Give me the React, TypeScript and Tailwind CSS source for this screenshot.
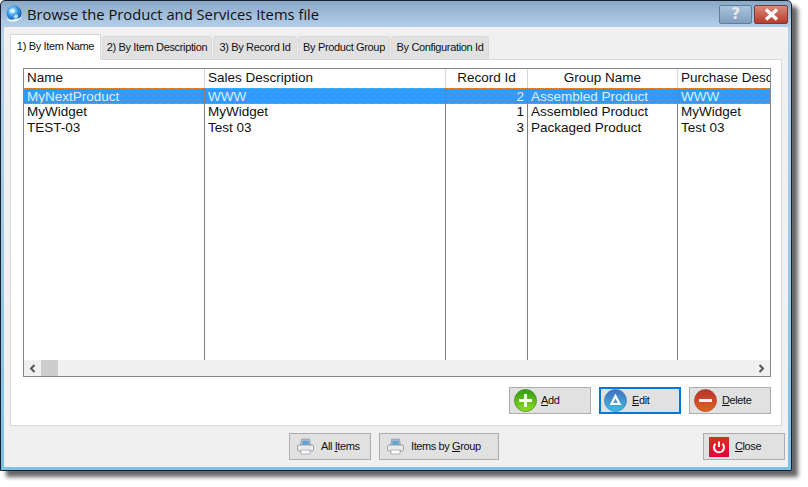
const columns = [
  { title: 'Name', width: 'w-[181px]', align: 'text-left', cells: ['MyNextProduct', 'MyWidget', 'TEST-03'] },
  { title: 'Sales Description', width: 'w-[241px]', align: 'text-left', cells: ['WWW', 'MyWidget', 'Test 03'] },
  { title: 'Record Id', width: 'w-[82px]', align: 'text-right', cells: ['2', '1', '3'] },
  { title: 'Group Name', width: 'w-[150px]', align: 'text-left', cells: ['Assembled Product', 'Assembled Product', 'Packaged Product'] },
  { title: 'Purchase Description', width: 'w-[94px]', align: 'text-left', cells: ['WWW', 'MyWidget', 'Test 03'] },
];

const tabs = [
  { label: '2) By Item Description', width: 'w-[110px]' },
  { label: '3) By Record Id', width: 'w-[84px]' },
  { label: 'By Product Group', width: 'w-[92px]' },
  { label: 'By Configuration Id', width: 'w-[98px]' },
];

function GlobeIcon() {
  return (
    <svg width="18" height="18" viewBox="0 0 18 18">
      <defs>
        <radialGradient id="globe" cx="0.4" cy="0.35" r="0.7">
          <stop offset="0" stopColor="#bfefff" />
          <stop offset="0.55" stopColor="#2f8fe0" />
          <stop offset="1" stopColor="#0d4fa8" />
        </radialGradient>
      </defs>
      <circle cx="9" cy="8" r="7.5" fill="url(#globe)" />
      <path d="M5 5c2-2 4-1 5 0s-1 3-3 3-3-2-2-3zM10 10c2-1 4 0 3 2s-3 2-4 1 0-2 1-3z" fill="#e4f8ff" opacity="0.75" />
      <path d="M1 14c3 4 11 4 16-2-3 1-10 4-16 2z" fill="#e6f5fc" />
    </svg>
  );
}

function PlusIcon() {
  return (
    <svg width="23" height="23" viewBox="0 0 23 23">
      <defs>
        <linearGradient id="green" x1="0" y1="0" x2="0" y2="1">
          <stop offset="0" stopColor="#2f9a12" />
          <stop offset="1" stopColor="#8fe01e" />
        </linearGradient>
      </defs>
      <circle cx="11.5" cy="11.5" r="11" fill="url(#green)" stroke="#3d8f22" strokeWidth="0.8" />
      <path d="M11.5 5v13M5 11.5h13" stroke="#f4fff0" strokeWidth="3" />
    </svg>
  );
}

function EditIcon() {
  return (
    <svg width="23" height="23" viewBox="0 0 23 23">
      <defs>
        <linearGradient id="blue" x1="0" y1="0" x2="0" y2="1">
          <stop offset="0" stopColor="#3f6fc0" />
          <stop offset="1" stopColor="#45bedc" />
        </linearGradient>
      </defs>
      <circle cx="11.5" cy="11.5" r="11" fill="url(#blue)" stroke="#4a7fb8" strokeWidth="0.8" />
      <path d="M11.5 7 15.5 15H7.5z" fill="none" stroke="#fff" strokeWidth="2.2" />
    </svg>
  );
}

function MinusIcon() {
  return (
    <svg width="23" height="23" viewBox="0 0 23 23">
      <defs>
        <linearGradient id="red" x1="0" y1="0" x2="0" y2="1">
          <stop offset="0" stopColor="#b8322c" />
          <stop offset="1" stopColor="#e0641e" />
        </linearGradient>
      </defs>
      <circle cx="11.5" cy="11.5" r="11" fill="url(#red)" stroke="#b04a3a" strokeWidth="0.8" />
      <path d="M5 11.5h13" stroke="#f8f0ee" strokeWidth="3" />
    </svg>
  );
}

function PowerIcon() {
  return (
    <svg width="20" height="20" viewBox="0 0 20 20">
      <defs>
        <linearGradient id="power" x1="0" y1="0" x2="0" y2="1">
          <stop offset="0" stopColor="#d9301c" />
          <stop offset="1" stopColor="#e8003a" />
        </linearGradient>
      </defs>
      <rect width="20" height="20" fill="url(#power)" />
      <path d="M6.5 6.8a5 5 0 1 0 7 0" fill="none" stroke="#fff" strokeWidth="2" />
      <path d="M10 4.5v5.5" stroke="#fff" strokeWidth="2" />
    </svg>
  );
}

function PrinterIcon() {
  return (
    <svg width="17" height="17" viewBox="0 0 17 17">
      <path d="M4.5 1h8l1 6h-10z" fill="#a9b8c6" stroke="#8b98a5" strokeWidth="0.6" />
      <rect x="5.5" y="3" width="6" height="4" fill="#58a6d6" />
      <rect x="0.5" y="7" width="16" height="6" rx="1.5" fill="#e8eaec" stroke="#9a9ea3" />
      <rect x="4" y="12" width="9" height="4" fill="#fbfbfb" stroke="#9a9ea3" strokeWidth="0.7" />
    </svg>
  );
}

function ActionButton({
  icon,
  width,
  focused,
  gap,
  children,
}: {
  icon: React.ReactNode;
  width: string;
  focused?: boolean;
  gap: string;
  children: React.ReactNode;
}) {
  return (
    <button
      className={`flex h-[27px] items-center bg-[#e1e1e1] text-[11px] tracking-[-0.4px] text-[#111] ${width} ${gap} ${
        focused ? 'border-2 border-[#0078d7] pl-[3px]' : 'border border-[#adadad] pl-[4px]'
      }`}
    >
      {icon}
      <span className="whitespace-nowrap">{children}</span>
    </button>
  );
}

// 1px dotted orange focus edge of the selected row
function FocusEdge() {
  return <div className="h-px shrink-0 bg-[repeating-linear-gradient(90deg,#f08a24_0_1px,#3399ff_1px_2px)]" />;
}

export default function App() {
  return (
    <div className="h-[487px] w-[808px] overflow-hidden bg-white font-['Liberation_Sans',sans-serif]">
      <div className="flex h-[471px] w-[792px] flex-col rounded-t-[5px] border border-[#16202b] bg-[linear-gradient(#8aa8c7,#b8d2ec_6%,#7cc0e6)] shadow-[6px_6px_4px_#666666]">
        <div className="flex h-[26px] shrink-0 items-center pl-[4px]">
          <GlobeIcon />
          <span className="ml-[4px] font-['Open_Sans',sans-serif] text-[14.75px] text-[#101010]">
            Browse the Product and Services Items file
          </span>
          <div className="ml-auto mr-[3px] mt-[4px] flex h-[19px] gap-[2px] self-start">
            <div className="flex w-[33px] items-center justify-center rounded-[2px] border border-[#5f7c98] bg-[linear-gradient(#a9c3dc,#7f9fbe)] font-['DejaVu_Sans',sans-serif] text-[15px] font-bold leading-none text-[#e8e8e8]">
              ?
            </div>
            <div className="flex w-[34px] items-center justify-center rounded-[2px] border border-[#7d3a33] bg-[linear-gradient(#d98a7c,#b83b2a)]">
              <svg width="15" height="13" viewBox="0 0 15 13">
                <path d="M2 1.5 13 11.5M13 1.5 2 11.5" stroke="#fff" strokeWidth="3.4" />
              </svg>
            </div>
          </div>
        </div>

        <div className="mx-[3px] mb-[3px] flex flex-1 flex-col bg-[#f0f0f0]">
          <div className="ml-[6px] mt-[7px] flex h-[25px] items-end gap-[1px] whitespace-nowrap text-[11px] tracking-[-0.35px] text-[#111]">
            <div className="z-10 -mb-px flex h-[26px] w-[91px] items-center justify-center border-x border-t border-[#d9d9d9] bg-white pb-[3px]">
              1) By Item Name
            </div>
            {tabs.map((tab) => (
              <div
                key={tab.label}
                className={`flex h-[23px] items-center justify-center rounded-t-[3px] border-x border-t border-[#d9d9d9] bg-[#e1e1e1] pb-[2px] ${tab.width}`}
              >
                {tab.label}
              </div>
            ))}
          </div>

          <div className="ml-[6px] mr-[6px] flex h-[367px] flex-col border border-[#d9d9d9] bg-white pl-[12px] pr-[10px] pt-[8px]">
            <div className="flex h-[309px] flex-col border border-[#828790] text-[13.5px] leading-[16px] text-[#111]">
              <div className="flex min-h-0 flex-1 overflow-hidden">
                {columns.map((col, c) => (
                  <div key={col.title} className={`flex shrink-0 flex-col ${col.width}`}>
                    <div
                      className={`h-[19px] overflow-hidden whitespace-nowrap border-r border-[#d5d5d5] px-[3px] pt-[1px] ${
                        col.align === 'text-right' || col.title === 'Group Name' ? 'text-center' : 'text-left'
                      }`}
                    >
                      {col.title}
                    </div>
                    <div className={`flex flex-1 flex-col ${c < columns.length - 1 ? 'border-r border-[#808080]' : ''}`}>
                      {col.cells.map((cell, i) =>
                        i === 0 ? (
                          <div key={i} className="flex h-[16px] flex-col bg-[#3399ff] text-[#dcefff]">
                            <FocusEdge />
                            <div className={`h-[14px] overflow-hidden whitespace-nowrap px-[3px] leading-[15px] ${col.align}`}>{cell}</div>
                            <FocusEdge />
                          </div>
                        ) : (
                          <div key={i} className={`h-[16px] overflow-hidden whitespace-nowrap px-[3px] ${col.align}`}>
                            {cell}
                          </div>
                        ),
                      )}
                    </div>
                  </div>
                ))}
              </div>
              <div className="flex h-[16px] shrink-0 items-center bg-[#f0f0f0]">
                <svg className="ml-[5px]" width="7" height="9" viewBox="0 0 7 9">
                  <path d="M5.5 1 2 4.5 5.5 8" fill="none" stroke="#555" strokeWidth="2" />
                </svg>
                <div className="ml-[5px] h-full w-[17px] bg-[#cdcdcd]" />
                <svg className="ml-auto mr-[5px]" width="7" height="9" viewBox="0 0 7 9">
                  <path d="M1.5 1 5 4.5 1.5 8" fill="none" stroke="#555" strokeWidth="2" />
                </svg>
              </div>
            </div>

            <div className="mt-[10px] flex justify-end gap-[8px]">
              <ActionButton icon={<PlusIcon />} width="w-[82px]" gap="gap-[4px]">
                <u>A</u>dd
              </ActionButton>
              <ActionButton icon={<EditIcon />} width="w-[82px]" gap="gap-[5px]" focused>
                <u>E</u>dit
              </ActionButton>
              <ActionButton icon={<MinusIcon />} width="w-[82px]" gap="gap-[5px]">
                <u>D</u>elete
              </ActionButton>
            </div>
          </div>

          <div className="mt-[7px] flex pl-[285px] pr-[3px]">
            <div className="flex gap-[8px]">
              <ActionButton icon={<span className="ml-[3px] flex"><PrinterIcon /></span>} width="w-[82px]" gap="gap-[7px]">
                All <u>I</u>tems
              </ActionButton>
              <ActionButton icon={<span className="ml-[3px] flex"><PrinterIcon /></span>} width="w-[120px]" gap="gap-[7px]">
                Items by <u>G</u>roup
              </ActionButton>
            </div>
            <div className="ml-auto">
              <ActionButton icon={<span className="ml-[1px] flex"><PowerIcon /></span>} width="w-[82px]" gap="gap-[6px]">
                <u>C</u>lose
              </ActionButton>
            </div>
          </div>
        </div>
      </div>
    </div>
  );
}
